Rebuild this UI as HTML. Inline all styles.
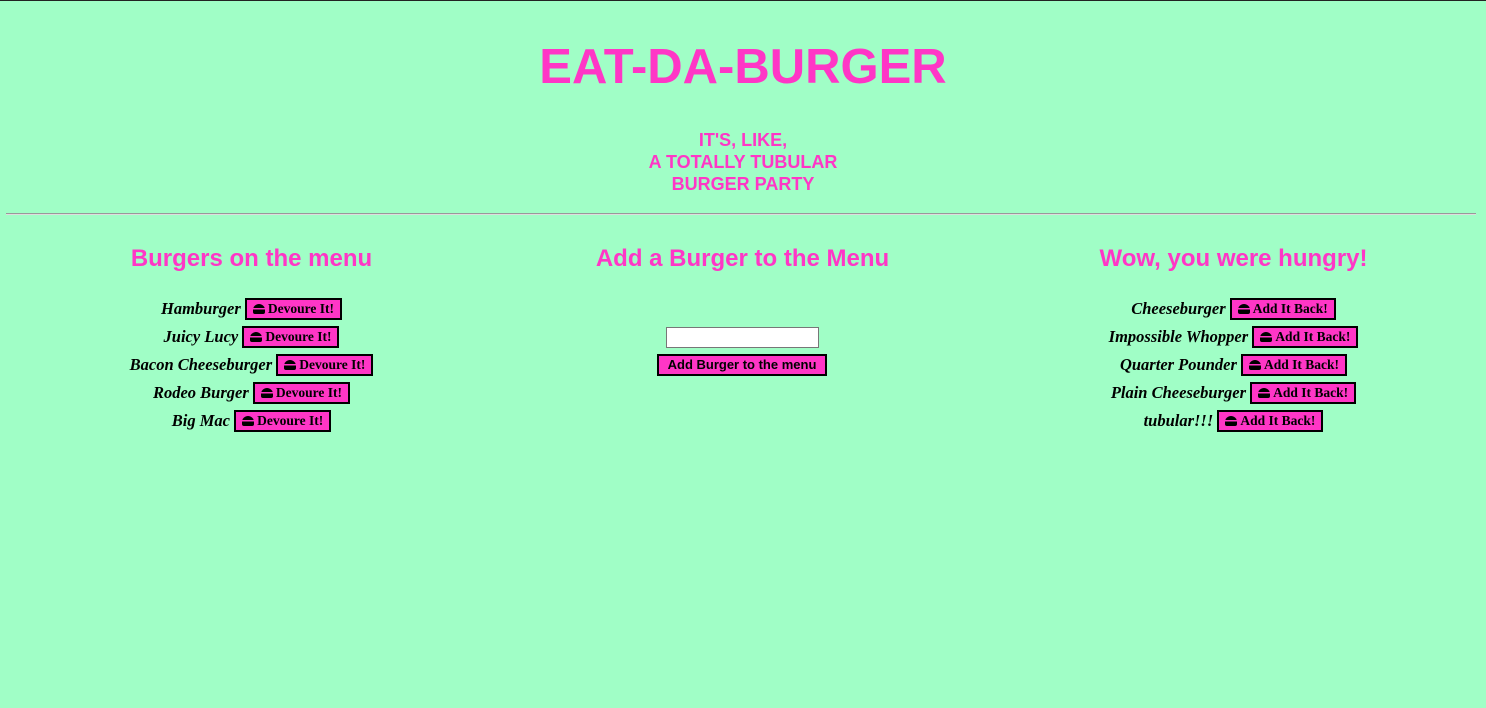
<!DOCTYPE html>
<html><head><style>
body{margin:0;background:#a0fec6;border-top:1px solid #222;width:1486px;height:707px;overflow:hidden;font-family:"Liberation Sans",sans-serif}
h1{margin:0;position:absolute;top:37px;left:0;width:1486px;text-align:center;color:#ff36c6;font-size:49px;font-weight:bold;line-height:60px}
.sub{position:absolute;top:129px;left:0;width:1486px;text-align:center;color:#ff36c6;font-size:18px;font-weight:bold;line-height:22px}
hr{position:absolute;top:213px;left:6px;width:1470px;margin:0;border:0;border-top:1px solid #999;border-bottom:1px solid #ddd}
.col{position:absolute;top:244px;width:495px;text-align:center}
h2{margin:0;color:#ff36c6;font-size:24px;line-height:30px;font-weight:bold}
.list{margin-top:21px}
.row{height:28px;line-height:28px;font-family:"Liberation Serif",serif;font-style:italic;font-weight:bold;font-size:16.5px}
.b{display:inline-block;vertical-align:middle;background:#ff36c6;border:2px solid #000;font-family:"Liberation Serif",serif;font-style:normal;font-weight:bold;font-size:13.5px;line-height:18px;padding:0 6px;margin-top:-3px}
.i{display:inline-block;width:12px;height:10px;vertical-align:-1px;margin-right:3px;background:linear-gradient(#000 0 40%,transparent 40% 55%,#000 55%);border-radius:6px 6px 2px 2px}
input{position:absolute;left:666px;top:327px;width:149px;height:17px;border:1px solid #777;padding:1px;background:#fff}
.add{position:absolute;left:657px;top:354px;width:166px;height:18px;background:#ff36c6;border:2px solid #000;font-size:13px;font-weight:bold;line-height:18px;text-align:center}
</style></head><body>
<h1>EAT-DA-BURGER</h1>
<div class="sub">IT'S, LIKE,<br>A TOTALLY TUBULAR<br>BURGER PARTY</div>
<hr>
<div class="col" style="left:4px"><h2>Burgers on the menu</h2><div class="list">
<div class="row">Hamburger <span class="b"><span class="i"></span>Devoure It!</span></div>
<div class="row">Juicy Lucy <span class="b"><span class="i"></span>Devoure It!</span></div>
<div class="row">Bacon Cheeseburger <span class="b"><span class="i"></span>Devoure It!</span></div>
<div class="row">Rodeo Burger <span class="b"><span class="i"></span>Devoure It!</span></div>
<div class="row">Big Mac <span class="b"><span class="i"></span>Devoure It!</span></div>
</div></div>
<div class="col" style="left:495px"><h2>Add a Burger to the Menu</h2></div>
<input type="text">
<div class="add">Add Burger to the menu</div>
<div class="col" style="left:986px"><h2>Wow, you were hungry!</h2><div class="list">
<div class="row">Cheeseburger <span class="b"><span class="i"></span>Add It Back!</span></div>
<div class="row">Impossible Whopper <span class="b"><span class="i"></span>Add It Back!</span></div>
<div class="row">Quarter Pounder <span class="b"><span class="i"></span>Add It Back!</span></div>
<div class="row">Plain Cheeseburger <span class="b"><span class="i"></span>Add It Back!</span></div>
<div class="row">tubular!!! <span class="b"><span class="i"></span>Add It Back!</span></div>
</div></div>
</body></html>
